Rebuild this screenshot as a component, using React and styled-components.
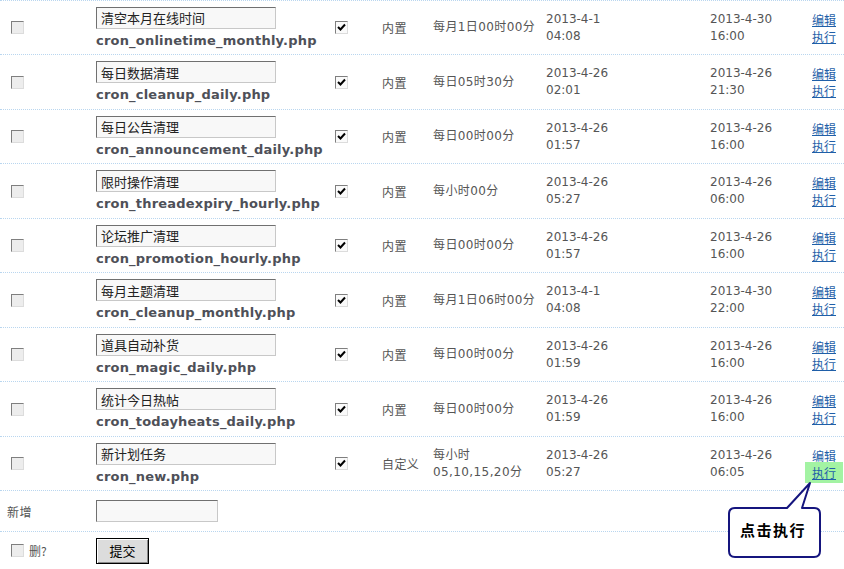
import React from "react";
import styled, { createGlobalStyle } from "styled-components";

const GlobalStyle = createGlobalStyle`
  html, body {
    margin: 0;
    padding: 0;
    background: #fff;
  }
  body {
    font-family: "DejaVu Sans", Verdana, "Noto Sans CJK SC", sans-serif;
    font-size: 12px;
    color: #555;
  }
`;

const crons = [
  { title: "清空本月在线时间", file: "cron_onlinetime_monthly.php", type: "内置", when: ["每月1日00时00分"], last: ["2013-4-1", "04:08"], next: ["2013-4-30", "16:00"] },
  { title: "每日数据清理", file: "cron_cleanup_daily.php", type: "内置", when: ["每日05时30分"], last: ["2013-4-26", "02:01"], next: ["2013-4-26", "21:30"] },
  { title: "每日公告清理", file: "cron_announcement_daily.php", type: "内置", when: ["每日00时00分"], last: ["2013-4-26", "01:57"], next: ["2013-4-26", "16:00"] },
  { title: "限时操作清理", file: "cron_threadexpiry_hourly.php", type: "内置", when: ["每小时00分"], last: ["2013-4-26", "05:27"], next: ["2013-4-26", "06:00"] },
  { title: "论坛推广清理", file: "cron_promotion_hourly.php", type: "内置", when: ["每日00时00分"], last: ["2013-4-26", "01:57"], next: ["2013-4-26", "16:00"] },
  { title: "每月主题清理", file: "cron_cleanup_monthly.php", type: "内置", when: ["每月1日06时00分"], last: ["2013-4-1", "04:08"], next: ["2013-4-30", "22:00"] },
  { title: "道具自动补货", file: "cron_magic_daily.php", type: "内置", when: ["每日00时00分"], last: ["2013-4-26", "01:59"], next: ["2013-4-26", "16:00"] },
  { title: "统计今日热帖", file: "cron_todayheats_daily.php", type: "内置", when: ["每日00时00分"], last: ["2013-4-26", "01:59"], next: ["2013-4-26", "16:00"] },
  { title: "新计划任务", file: "cron_new.php", type: "自定义", when: ["每小时", "05,10,15,20分"], last: ["2013-4-26", "05:27"], next: ["2013-4-26", "06:05"], highlight: true },
];

function CheckBox({ checked }) {
  return (
    <Box $checked={checked}>
      {checked && (
        <svg width="9" height="9" viewBox="0 0 9 9">
          <path d="M1 4 L3.5 6.5 L8 1.5" stroke="#000" strokeWidth="2" fill="none" />
        </svg>
      )}
    </Box>
  );
}

function App() {
  return (
    <Page>
      <GlobalStyle />
      <List>
        {crons.map((c, i) => (
          <Row key={c.file} $tall={i % 2 === 1}>
            <Cell $pad="11px">
              <CheckBox />
            </Cell>
            <NameCell>
              <TitleInput defaultValue={c.title} />
              <FileName>{c.file}</FileName>
            </NameCell>
            <Cell>
              <CheckBox checked />
            </Cell>
            <Cell>
              <Cjk>{c.type}</Cjk>
            </Cell>
            <Lines>
              {c.when.map((w) => (
                <Cjk key={w}>{w}</Cjk>
              ))}
            </Lines>
            <Lines>
              {c.last.map((t) => (
                <span key={t}>{t}</span>
              ))}
            </Lines>
            <Lines>
              {c.next.map((t) => (
                <span key={t}>{t}</span>
              ))}
            </Lines>
            <Lines>
              <OpLink href="#">编辑</OpLink>
              <OpLink href="#" $hl={c.highlight}>
                执行
              </OpLink>
            </Lines>
          </Row>
        ))}
        <AddRow>
          <Cell $pad="7px">
            <Cjk>新增</Cjk>
          </Cell>
          <Cell>
            <NewInput />
          </Cell>
        </AddRow>
        <FootRow>
          <Cell $pad="11px">
            <CheckBox />
            <DelLabel>删?</DelLabel>
          </Cell>
          <Cell>
            <Submit>提交</Submit>
          </Cell>
        </FootRow>
      </List>
      <Callout>
        <svg width="100" height="84" viewBox="0 0 100 84">
          <path
            d="M10 30 L62 30 L85 5 L77 30 L89 30 Q95 30 95 36 L95 73 Q95 79 89 79 L10 79 Q4 79 4 73 L4 36 Q4 30 10 30 Z"
            fill="#fff"
            stroke="#15157e"
            strokeWidth="2"
            strokeLinejoin="round"
          />
        </svg>
        <CalloutText>点击执行</CalloutText>
      </Callout>
    </Page>
  );
}

export default App;

const Page = styled.div`
  position: relative;
  width: 844px;
  height: 569px;
  overflow: hidden;
`;

const List = styled.div`
  border-top: 1px dotted #b9d6ef;
`;

const Row = styled.div`
  display: grid;
  grid-template-columns: 96px 239px 47px 51px 113px 164px 102px 1fr;
  align-items: center;
  box-sizing: border-box;
  height: ${({ $tall }) => ($tall ? "55px" : "54px")};
  border-bottom: 1px dotted #b9d6ef;
`;

const AddRow = styled(Row)`
  height: 41px;
  grid-template-columns: 96px 1fr;
`;

const FootRow = styled(Row)`
  height: 37px;
  border-bottom: none;
  grid-template-columns: 96px 1fr;
`;

const Cell = styled.div`
  display: flex;
  align-items: center;
  padding-left: ${({ $pad }) => $pad || "0"};
`;

const NameCell = styled.div`
  display: flex;
  flex-direction: column;
  align-items: flex-start;
`;

const Lines = styled.div`
  display: flex;
  flex-direction: column;
  align-items: flex-start;
  line-height: 17px;
`;

const Cjk = styled.span`
  font-family: "DejaVu Sans", "Noto Sans CJK SC", sans-serif;
  font-size: 12px;
  letter-spacing: 0.4px;
  color: #555;
`;

const Box = styled.span`
  display: inline-flex;
  align-items: center;
  justify-content: center;
  box-sizing: border-box;
  width: 13px;
  height: 13px;
  border: 1px solid;
  border-color: #7f7f7f #dcdcdc #dcdcdc #7f7f7f;
  background: ${({ $checked }) => ($checked ? "#fafafa" : "#ededed")};
`;

const TitleInput = styled.input`
  box-sizing: border-box;
  width: 180px;
  height: 22px;
  margin: 0;
  padding: 0 4px;
  border: 1px solid;
  border-color: #707070 #c8c8c8 #c8c8c8 #707070;
  background: #f8f8f8;
  font-family: "Noto Sans CJK SC", sans-serif;
  font-size: 13px;
  color: #222;
  outline: none;
`;

const NewInput = styled(TitleInput)`
  width: 122px;
`;

const FileName = styled.span`
  margin-top: 4px;
  font-family: "DejaVu Sans", Verdana, sans-serif;
  font-weight: bold;
  font-size: 13px;
  letter-spacing: 0.2px;
  line-height: 16px;
  color: #4e5058;
`;

const OpLink = styled.a`
  font-family: "Noto Sans CJK SC", sans-serif;
  font-size: 12px;
  line-height: 17px;
  color: #1f5fa8;
  text-decoration: underline;
  background: ${({ $hl }) => ($hl ? "#a3f3a3" : "transparent")};
  padding: ${({ $hl }) => ($hl ? "2px 7px" : "0")};
  margin: ${({ $hl }) => ($hl ? "-2px -7px" : "0")};
`;

const DelLabel = styled.span`
  margin-left: 5px;
  font-family: "Noto Sans CJK SC", sans-serif;
  font-size: 12px;
  color: #555;
`;

const Submit = styled.button`
  box-sizing: border-box;
  width: 53px;
  height: 26px;
  padding: 0;
  border: 1px solid #000;
  box-shadow: inset 1px 1px 0 #fff, inset -1px -1px 0 #888;
  background: #dcdcdc;
  font-family: "Noto Sans CJK SC", sans-serif;
  font-size: 13px;
  color: #000;
`;

const Callout = styled.div`
  position: absolute;
  left: 725px;
  top: 478px;
  width: 100px;
  height: 84px;

  svg {
    position: absolute;
    left: 0;
    top: 0;
  }
`;

const CalloutText = styled.span`
  position: absolute;
  left: 15px;
  top: 43px;
  font-family: "Noto Sans CJK SC", sans-serif;
  font-weight: bold;
  font-size: 15px;
  line-height: 18px;
  letter-spacing: 1.5px;
  color: #000;
`;
